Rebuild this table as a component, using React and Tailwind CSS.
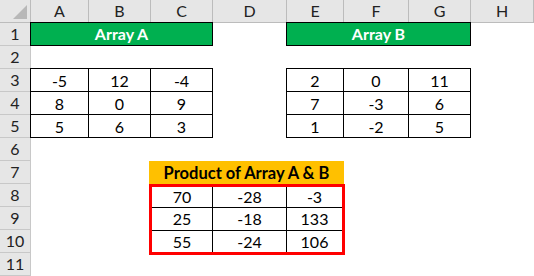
import React from "react";

const cols = ["A", "B", "C", "D", "E", "F", "G", "H"];
const rows = [1, 2, 3, 4, 5, 6, 7, 8, 9, 10, 11];

function Table({ className, data }) {
  return (
    <div className={className}>
      {data.flat().map((v, i) => (
        <div
          key={i}
          className="flex items-center justify-center border-r border-b border-black pt-px text-[16px] text-black"
        >
          {v}
        </div>
      ))}
    </div>
  );
}

export default function App() {
  return (
    <div
      className="w-[534px] h-[276px] overflow-hidden bg-white grid grid-cols-[31px_58px_62px_62px_74px_57px_65px_62px_1fr] grid-rows-[repeat(12,23px)]"
      style={{ fontFamily: "Lato, 'Open Sans', sans-serif" }}
    >
      {/* corner */}
      <div className="col-start-1 row-start-1 bg-[#e6e6e6] border-r border-b border-[#bcbcbc] flex items-end justify-end p-[3px]">
        <svg width="14" height="14" viewBox="0 0 14 14">
          <polygon points="14,0 14,14 0,14" fill="#b8b8b8" />
        </svg>
      </div>
      {cols.map((c, i) => (
        <div
          key={c}
          className="row-start-1 bg-[#e6e6e6] border-r border-b border-[#bcbcbc] flex items-center justify-center text-[16px] text-[#222]"
          style={{ gridColumnStart: i + 2 }}
        >
          {c}
        </div>
      ))}
      {rows.map((r) => (
        <div
          key={r}
          className="col-start-1 bg-[#e6e6e6] border-r border-b border-[#c8c8c8] flex items-center justify-center text-[16px] text-[#222]"
          style={{ gridRowStart: r + 1 }}
        >
          {r}
        </div>
      ))}

      {/* Array A header */}
      <div className="col-start-2 col-span-3 row-start-2 -ml-px -mt-px border border-black bg-[#00b050] flex items-center justify-center text-white font-bold text-[16px]">
        Array A
      </div>
      {/* Array B header */}
      <div className="col-start-6 col-span-3 row-start-2 -ml-px -mt-px border border-black bg-[#00b050] flex items-center justify-center text-white font-bold text-[16px]">
        Array B
      </div>

      <Table
        className="col-start-2 col-span-3 row-start-4 row-span-3 -ml-px -mt-px border-l border-t border-black grid grid-cols-[58px_62px_62px] grid-rows-3"
        data={[
          ["-5", "12", "-4"],
          ["8", "0", "9"],
          ["5", "6", "3"],
        ]}
      />
      <Table
        className="col-start-6 col-span-3 row-start-4 row-span-3 -ml-px -mt-px border-l border-t border-black grid grid-cols-[57px_65px_62px] grid-rows-3"
        data={[
          ["2", "0", "11"],
          ["7", "-3", "6"],
          ["1", "-2", "5"],
        ]}
      />

      {/* Product header */}
      <div className="col-start-4 col-span-3 row-start-8 -ml-[2px] bg-[#ffc000] flex items-center justify-center text-black font-bold text-[16.5px] pt-px">
        Product of Array A &amp; B
      </div>

      {/* Product table */}
      <div className="col-start-4 col-span-3 row-start-9 row-span-3 -ml-[2px] -mr-px -mb-[2px] border-[3px] border-[#ff0000] grid grid-cols-[61px_74px_55px] grid-rows-[21px_23px_21px]">
        {[
          ["70", "-28", "-3"],
          ["25", "-18", "133"],
          ["55", "-24", "106"],
        ].map((row, ri) =>
          row.map((v, ci) => (
            <div
              key={ri + "-" + ci}
              className={
                "flex items-center justify-center text-[16px] text-black border-black " +
                (ci < 2 ? "border-r " : "") +
                (ri < 2 ? "border-b" : "")
              }
            >
              {v}
            </div>
          ))
        )}
      </div>
    </div>
  );
}
